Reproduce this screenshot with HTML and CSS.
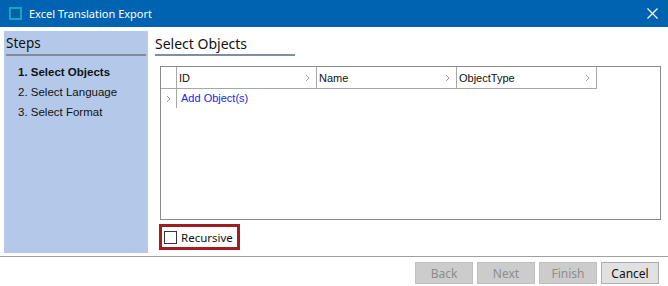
FILE: index.html
```html
<!DOCTYPE html>
<html lang="en">
<head>
  <meta charset="UTF-8" />
  <title>Excel Translation Export</title>
  <link rel="stylesheet" href="styles.css">
</head>
<body>

<div class="titlebar">
  <span class="app-icon"></span>
  <span class="title">Excel Translation Export</span>
  <svg class="close" width="11" height="11" viewBox="0 0 11 11">
    <path d="M0.5 0.5 L10.5 10.5 M10.5 0.5 L0.5 10.5" stroke="#fff" stroke-width="1.2" fill="none"/>
  </svg>
</div>

<div class="main">
  <div class="steps">
    <div class="panel-head">Steps</div>
    <ul class="step-list">
      <li class="current">1. Select Objects</li>
      <li>2. Select Language</li>
      <li>3. Select Format</li>
    </ul>
  </div>

  <div class="content">
    <div class="content-head">Select Objects</div>

    <div class="grid">
      <div class="row header">
        <div class="sel"></div>
        <div class="col">ID <svg class="chev" width="5" height="8" viewBox="0 0 5 8"><path d="M1 1 L4 4 L1 7" stroke="#9a9a9a" fill="none"/></svg></div>
        <div class="col">Name <svg class="chev" width="5" height="8" viewBox="0 0 5 8"><path d="M1 1 L4 4 L1 7" stroke="#9a9a9a" fill="none"/></svg></div>
        <div class="col">ObjectType <svg class="chev" width="5" height="8" viewBox="0 0 5 8"><path d="M1 1 L4 4 L1 7" stroke="#9a9a9a" fill="none"/></svg></div>
      </div>
      <div class="row add">
        <div class="sel"><svg width="5" height="8" viewBox="0 0 5 8"><path d="M1 1 L4 4 L1 7" stroke="#9a9a9a" fill="none"/></svg></div>
        <div class="add-link">Add Object(s)</div>
      </div>
    </div>

    <div class="options">
      <label class="check"><span class="box"></span>Recursive</label>
    </div>
  </div>
</div>

<div class="footer">
  <button class="btn" disabled>Back</button>
  <button class="btn" disabled>Next</button>
  <button class="btn" disabled>Finish</button>
  <button class="btn primary">Cancel</button>
</div>

</body>
</html>
```

FILE: styles.css
```css
body {
  margin: 0;
  width: 668px;
  height: 286px;
  background: #fff;
  font-family: "Liberation Sans", Arial, sans-serif;
  overflow: hidden;
}
.titlebar {
  height: 27px;
  background: #0063b1;
  display: flex;
  align-items: center;
  color: #fff;
}
.app-icon {
  width: 9px;
  height: 9px;
  margin-left: 9px;
  margin-right: 7px;
  border: 2px solid #17a3c9;
  background: #06619e;
}
.title {
  font-family: "Noto Sans", sans-serif;
  font-size: 11px;
  flex: 1;
}
.close {
  margin-right: 10px;
}
.main {
  display: flex;
  padding-top: 4px;
  height: 222px;
}
.steps {
  width: 144px;
  margin-left: 4px;
  background: #b4c9e9;
}
.panel-head,
.content-head {
  font-family: "Noto Sans", sans-serif;
  font-size: 14px;
  color: #111;
  padding-top: 3px;
  height: 20px;
  border-bottom: 2px solid #7f8b99;
}
.panel-head {
  margin: 0 2px;
  font-size: 13.5px;
}
.step-list {
  list-style: none;
  margin: 0;
  padding: 6px 0 0 14px;
  font-size: 11.5px;
  color: #111;
}
.step-list li {
  height: 20px;
  line-height: 20px;
}
.step-list .current {
  font-weight: bold;
}
.content {
  flex: 1;
  padding-left: 7px;
}
.content-head {
  width: 140px;
  border-bottom-color: #7d8fa6;
}
.grid {
  margin: 10px 0 0 5px;
  width: 499px;
  height: 152px;
  border: 1px solid #8a8a8a;
  font-size: 11px;
}
.row {
  display: flex;
}
.row.header {
  height: 22px;
}
.sel {
  width: 15px;
  border-right: 1px solid #a8a8a8;
  border-bottom: 1px solid #a8a8a8;
  display: flex;
  align-items: center;
  justify-content: center;
}
.col {
  width: 140px;
  box-sizing: border-box;
  border-right: 1px solid #a8a8a8;
  border-bottom: 1px solid #a8a8a8;
  display: flex;
  align-items: center;
  justify-content: space-between;
  padding: 0 6px 0 2px;
  color: #111;
}
.row.add {
  height: 19px;
}
.row.add .sel {
  border-bottom: none;
}
.add-link {
  color: #2323e6;
  padding-left: 4px;
  line-height: 19px;
}
.options {
  margin-top: 4px;
  margin-left: 4px;
}
.check {
  display: inline-flex;
  align-items: center;
  width: 75px;
  height: 20px;
  border: 3px solid #a11d24;
  font-family: "Noto Sans", sans-serif;
  font-size: 11.5px;
  color: #111;
}
.box {
  width: 11px;
  height: 11px;
  border: 1px solid #333;
  margin: 0 4px 0 2px;
}
.footer {
  border-top: 1px solid #a0a0a0;
  margin-top: 3px;
  display: flex;
  justify-content: flex-end;
  gap: 4px;
  padding: 5px 9px 0 0;
}
.btn {
  width: 58px;
  height: 22px;
  font-family: "Noto Sans", sans-serif;
  font-size: 12px;
  border: 1px solid #bfbfbf;
  background: #cccccc;
  color: #8d8d8d;
  padding: 0;
}
.btn.primary {
  background: #e1e1e1;
  border-color: #adadad;
  color: #111;
}
```
